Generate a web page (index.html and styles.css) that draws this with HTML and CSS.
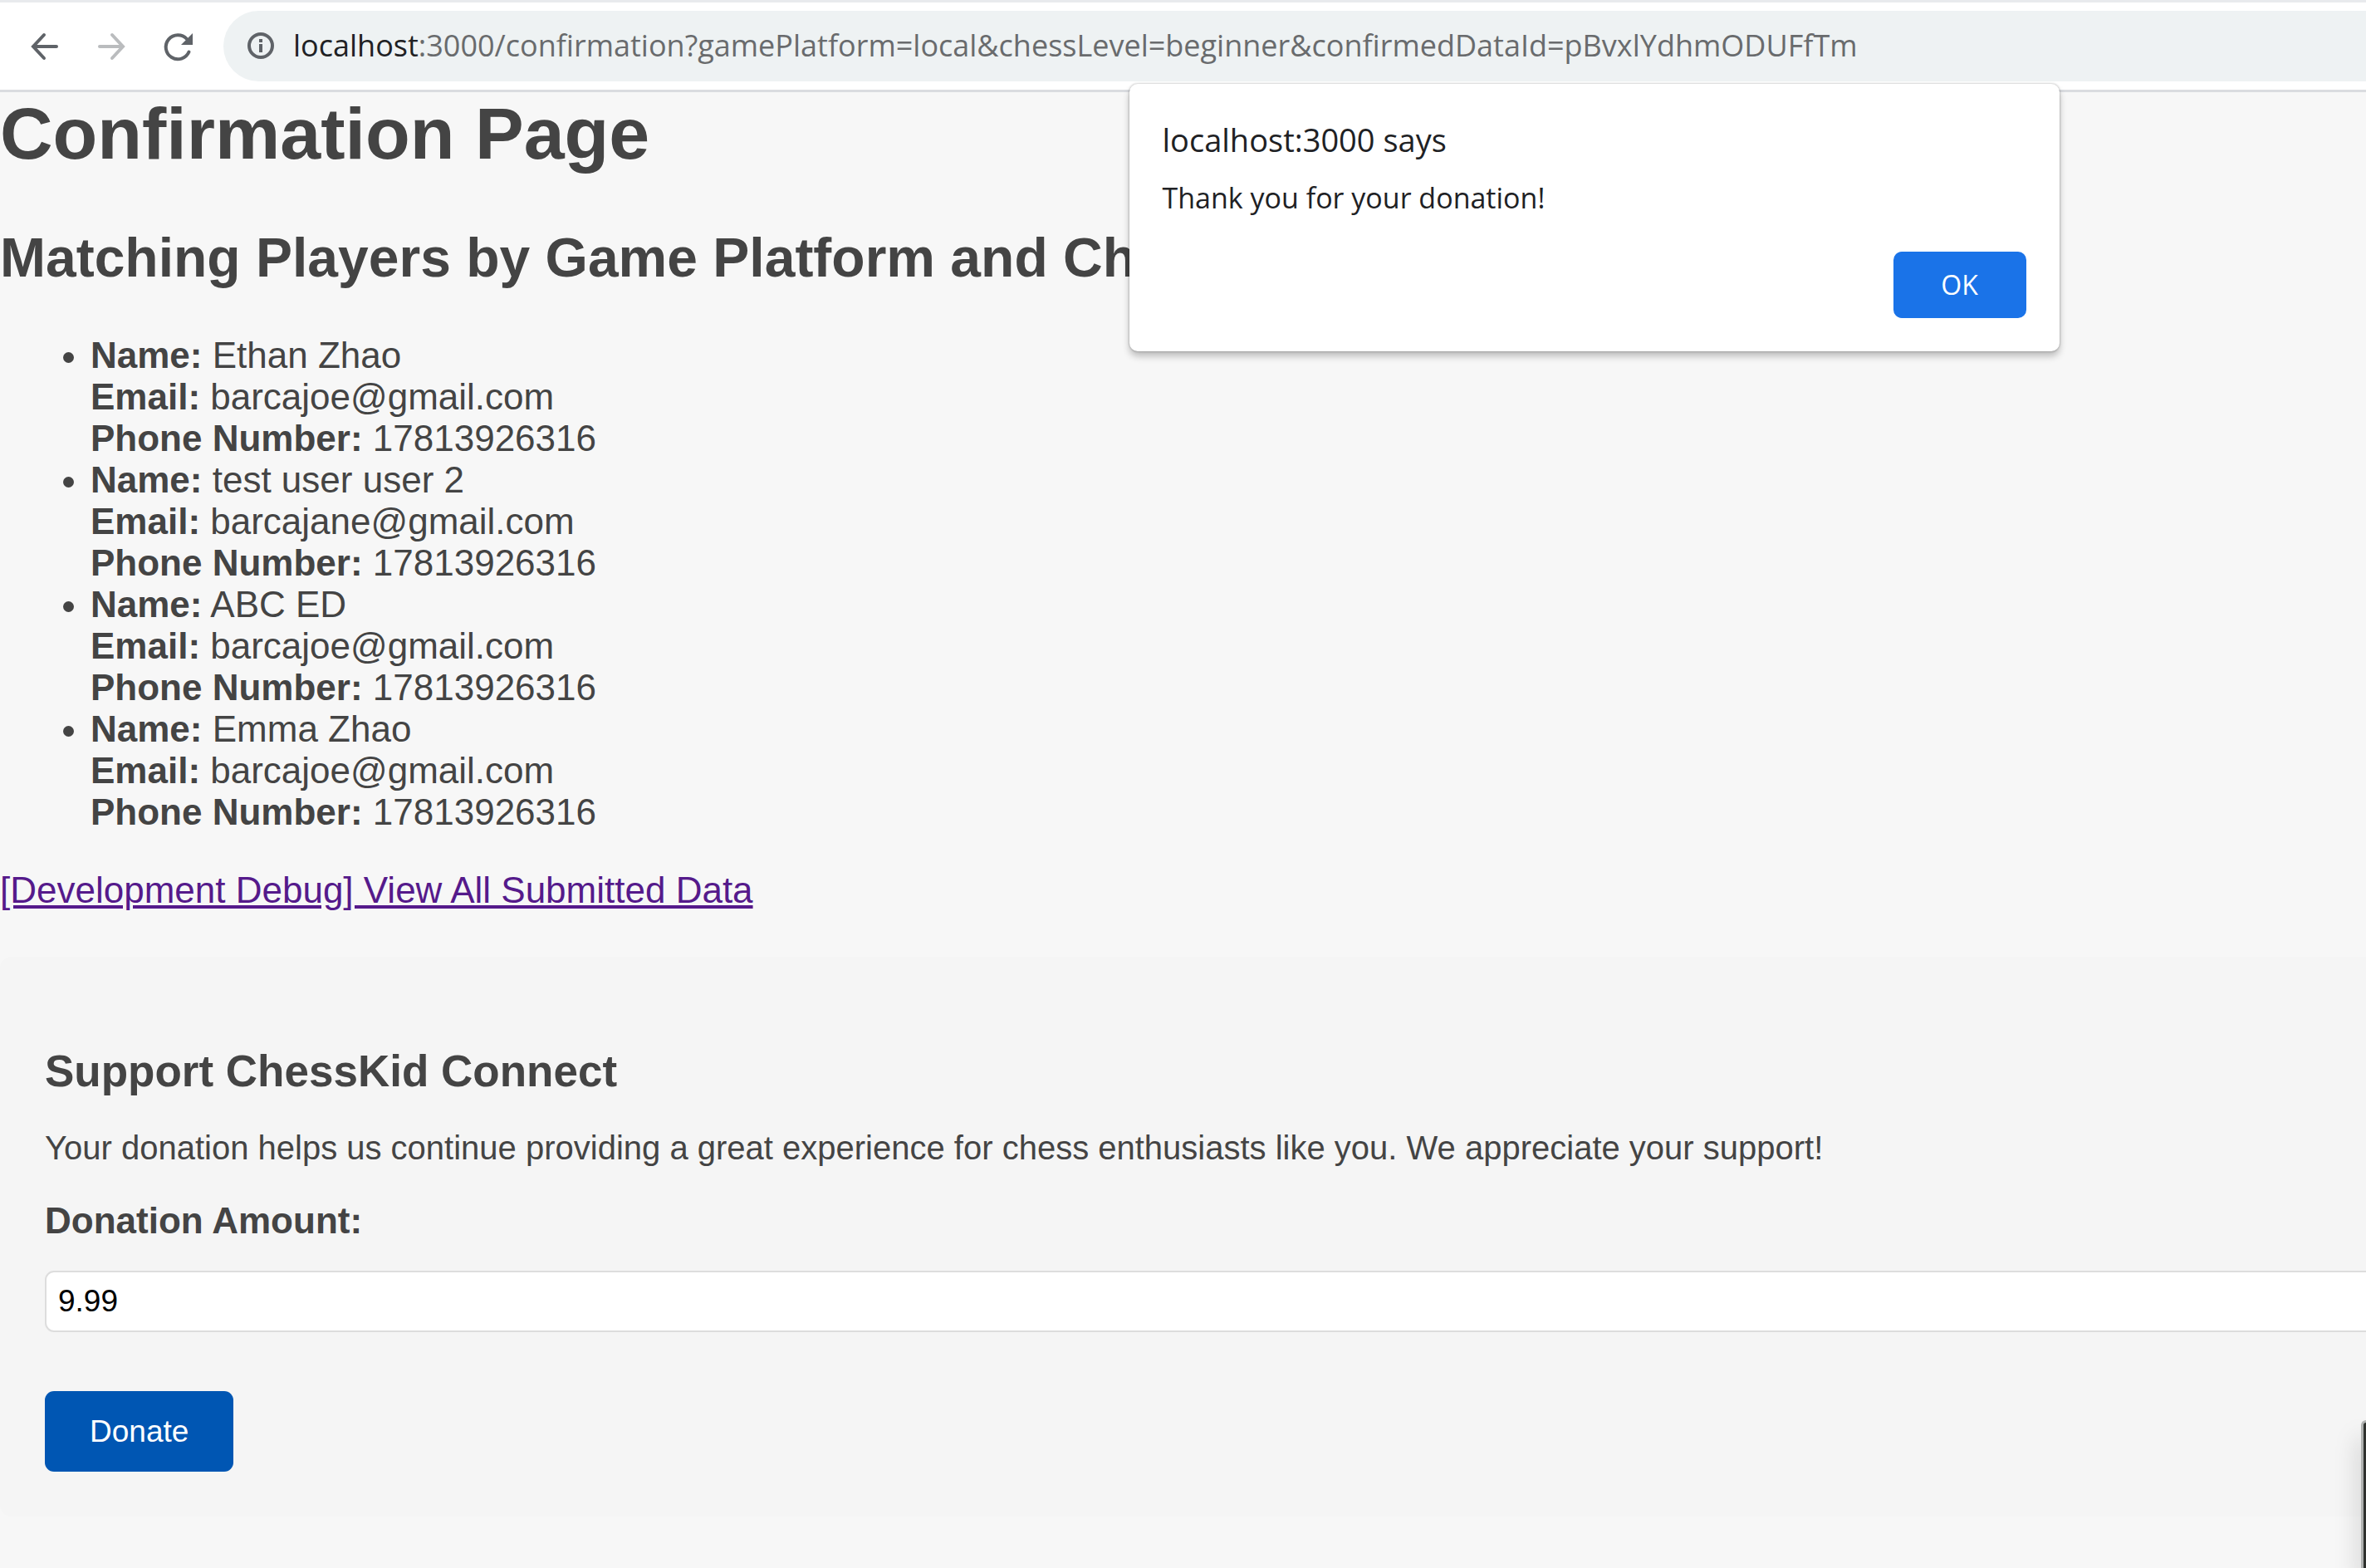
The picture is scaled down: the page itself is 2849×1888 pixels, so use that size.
FILE: index.html
```html
<!DOCTYPE html>
<html lang="en">
<head>
<meta charset="utf-8">
<title>Confirmation Page</title>
<link rel="stylesheet" href="styles.css">
</head>
<body>
<header class="toolbar">
  <nav class="nav-buttons" aria-label="Browser">
    <button class="icon-button" type="button" aria-label="Back">
      <svg viewBox="0 0 44 44"><path d="M36 22H8M21 8L8 22l13 14"/></svg>
    </button>
    <button class="icon-button is-disabled" type="button" aria-label="Forward">
      <svg viewBox="0 0 44 44"><path d="M8 22h28M23 8l13 14-13 14"/></svg>
    </button>
    <button class="icon-button" type="button" aria-label="Reload">
      <svg viewBox="0 0 44 44"><path d="M35.500 28.500A14.500 14.500 0 1 1 33 13"/><path class="fill" d="M40 6v14H26z"/></svg>
    </button>
  </nav>
  <div class="address-bar">
    <svg class="info" viewBox="0 0 44 44"><circle cx="22" cy="22" r="14"/><path class="flat" d="M22 20v10M22 14v4"/></svg>
    <span class="url"><span class="host">localhost</span>:3000/confirmation?gamePlatform=local&amp;chessLevel=beginner&amp;confirmedDataId=pBvxlYdhmODUFfTm</span>
  </div>
</header>

<main class="page">
  <h1>Confirmation Page</h1>
  <h2>Matching Players by Game Platform and Chess Level</h2>
  <ul class="players">
    <li><strong>Name:</strong> Ethan Zhao<br><strong>Email:</strong> barcajoe@gmail.com<br><strong>Phone Number:</strong> 17813926316</li>
    <li><strong>Name:</strong> test user user 2<br><strong>Email:</strong> barcajane@gmail.com<br><strong>Phone Number:</strong> 17813926316</li>
    <li><strong>Name:</strong> ABC ED<br><strong>Email:</strong> barcajoe@gmail.com<br><strong>Phone Number:</strong> 17813926316</li>
    <li><strong>Name:</strong> Emma Zhao<br><strong>Email:</strong> barcajoe@gmail.com<br><strong>Phone Number:</strong> 17813926316</li>
  </ul>
  <a class="debug-link" href="#all">[Development Debug] View All Submitted Data</a>

  <form class="donation">
    <h3>Support ChessKid Connect</h3>
    <p>Your donation helps us continue providing a great experience for chess enthusiasts like you. We appreciate your support!</p>
    <label for="amount">Donation Amount:</label>
    <input id="amount" type="text" inputmode="decimal" value="9.99">
    <button class="donate" type="button">Donate</button>
  </form>
</main>

<div class="dialog" role="alertdialog" aria-labelledby="dialog-title" aria-describedby="dialog-message">
  <div class="dialog-title" id="dialog-title">localhost:3000 says</div>
  <div class="dialog-message" id="dialog-message">Thank you for your donation!</div>
  <button class="ok" type="button">OK</button>
</div>
<div class="side-window"></div>
</body>
</html>
```
FILE: styles.css
```css
* { box-sizing: border-box; }

body {
  margin: 0;
  min-height: 100vh;
  position: relative;
  overflow-x: hidden;
  background: #f7f7f7;
  color: #444;
  font: 44px/50px "Liberation Sans", Arial, sans-serif;
}

button { border: 0; font: inherit; }

/* Browser toolbar */
.toolbar {
  display: flex;
  align-items: center;
  gap: 33px;
  height: 111px;
  padding-left: 32px;
  background: #fff;
  border-top: 3px solid #e8eaed;
  border-bottom: 3px solid #dadce0;
}
.nav-buttons { display: flex; gap: 36px; }
.icon-button { display: block; padding: 0; background: none; color: #5f6368; }
.is-disabled { color: #babcbe; }
.toolbar svg {
  display: block;
  flex: none;
  width: 44px;
  height: 44px;
  fill: none;
  stroke: currentColor;
  stroke-width: 4;
  stroke-linecap: round;
}
.toolbar .fill { fill: currentColor; stroke: none; }
.toolbar .flat { stroke-linecap: butt; }
.address-bar {
  display: flex;
  flex: 1;
  align-items: center;
  gap: 17px;
  height: 85px;
  padding: 0 0 2px 23px;
  border-radius: 43px 0 0 43px;
  background: #eef2f3;
  color: #5f6368;
}
.url {
  color: #696b6d;
  font-family: "Open Sans", "Noto Sans", sans-serif;
  font-size: 36px;
  white-space: nowrap;
}
.host { color: #202124; }

/* Page content */
h1, h2, h3, p, ul { margin: 0; }
h1 { font-size: 88px; line-height: 100px; }
h2 { margin-top: 61px; font-size: 66px; line-height: 76px; white-space: nowrap; }
.players { margin-top: 55px; padding-left: 109px; }
.debug-link {
  display: block;
  width: fit-content;
  margin-top: 44px;
  color: #551a8b;
}

.donation {
  display: flex;
  flex-direction: column;
  align-items: flex-start;
  margin-top: 55px;
  margin-right: -80px;
  padding: 108px 54px 54px;
  border-radius: 14px;
  background: #f5f5f5;
}
h3 { font-size: 53px; line-height: 60px; }
p { margin-top: 39px; font-size: 40px; line-height: 46px; }
label { margin-top: 40px; font-weight: bold; }
input {
  width: 100%;
  height: 74px;
  margin-top: 35px;
  padding: 0 14px;
  border: 2px solid #ddd;
  border-radius: 11px;
  background: #fff;
  color: #000;
  font: 37px "Liberation Sans", Arial, sans-serif;
}
.donate {
  height: 97px;
  margin-top: 71px;
  padding: 0 54px;
  border-radius: 11px;
  background: #0056b3;
  color: #fff;
  font-size: 37px;
}

/* Alert */
.dialog {
  position: absolute;
  top: 101px;
  left: 50%;
  display: flex;
  flex-direction: column;
  width: 1120px;
  margin-left: -65px;
  padding: 40px;
  border-radius: 10px;
  background: #fff;
  box-shadow: 0 0 2px 1px #00000026, 0 6px 8px #0000003d;
  color: #202124;
  font-family: "Open Sans", "Noto Sans", sans-serif;
}
.dialog-title { font-size: 38px; line-height: 54px; }
.dialog-message { margin-top: 19px; font-size: 34px; line-height: 48px; }
.ok {
  align-self: flex-end;
  width: 160px;
  height: 80px;
  margin-top: 41px;
  border-radius: 10px;
  background: #1a73e8;
  color: #fff;
  font-size: 32px;
}

/* Edge of the window that overlaps the page */
.side-window {
  position: absolute;
  top: 1710px;
  right: 0;
  bottom: 0;
  width: 6px;
  border: solid #b0b2b1;
  border-width: 3px 0 0 3px;
  border-radius: 6px 0 0 0;
  background: #30322f;
  box-shadow: 0 20px 28px #00000066;
}
```
